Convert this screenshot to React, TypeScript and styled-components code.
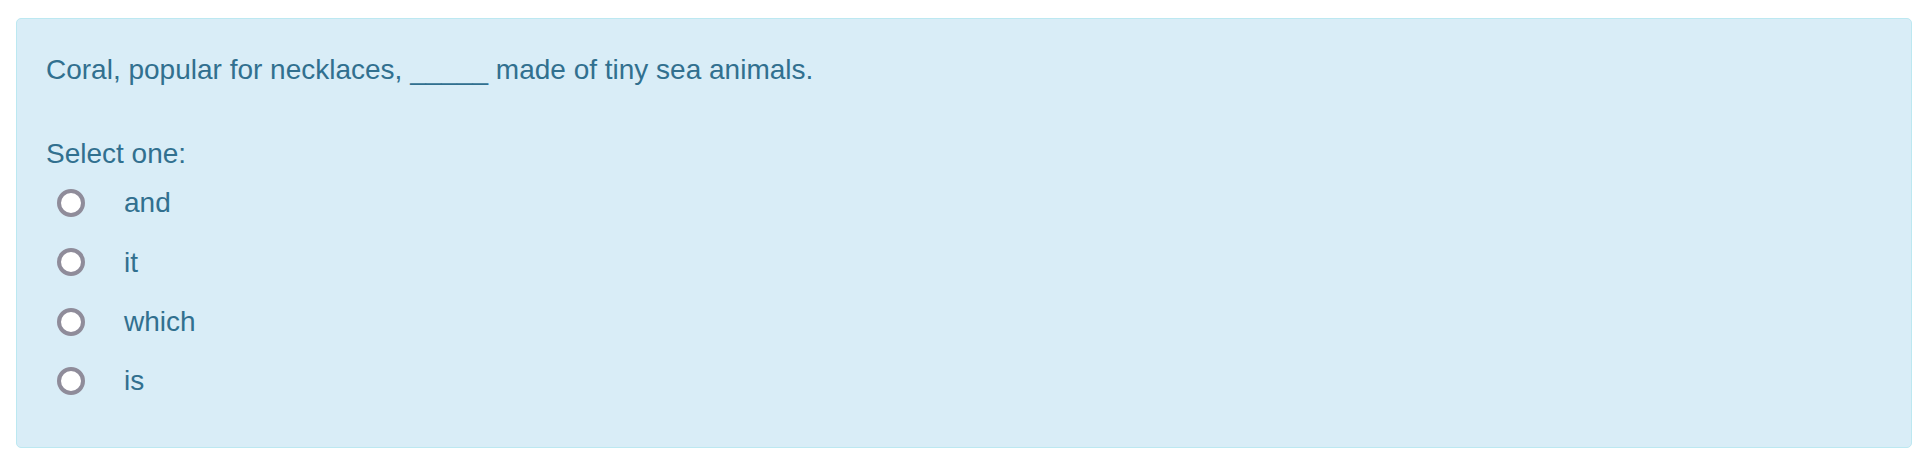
import React from "react";
import styled, { createGlobalStyle } from "styled-components";

const GlobalStyle = createGlobalStyle`
  html, body {
    margin: 0;
    padding: 0;
    background: #ffffff;
  }
  body {
    font-family: "Liberation Sans", Arial, Helvetica, sans-serif;
  }
`;

const Page = styled.div`
  padding: 18px 18px 12px 16px;
`;

const QuestionBox = styled.div`
  box-sizing: border-box;
  background: #d9edf7;
  border: 1px solid #bce8f1;
  border-radius: 5px;
  color: #31708f;
  font-size: 28px;
  line-height: 39px;
  padding: 30.8px 29px 46.5px 29px;
`;

const QuestionText = styled.div`
  margin: 0;
`;

const Prompt = styled.div`
  margin-top: 45px;
`;

const Options = styled.div`
  display: flex;
  flex-direction: column;
  gap: 20.3px;
  margin-top: 10.7px;
`;

const OptionRow = styled.label`
  display: flex;
  align-items: center;
  height: 39px;
`;

const Radio = styled.input.attrs({ type: "radio" })`
  appearance: none;
  -webkit-appearance: none;
  box-sizing: border-box;
  width: 28px;
  height: 28px;
  margin: 0 0 0 11px;
  border: 4px solid #8f8c9a;
  border-radius: 50%;
  background: #ffffff;
  flex: none;
`;

const OptionLabel = styled.span`
  margin-left: 39px;
`;

const options = ["and", "it", "which", "is"];

export default function App() {
  return (
    <>
      <GlobalStyle />
      <Page>
        <QuestionBox>
          <QuestionText>
            Coral, popular for necklaces, _____ made of tiny sea animals.
          </QuestionText>
          <Prompt>Select one:</Prompt>
          <Options>
            {options.map((o) => (
              <OptionRow key={o}>
                <Radio name="answer" />
                <OptionLabel>{o}</OptionLabel>
              </OptionRow>
            ))}
          </Options>
        </QuestionBox>
      </Page>
    </>
  );
}
